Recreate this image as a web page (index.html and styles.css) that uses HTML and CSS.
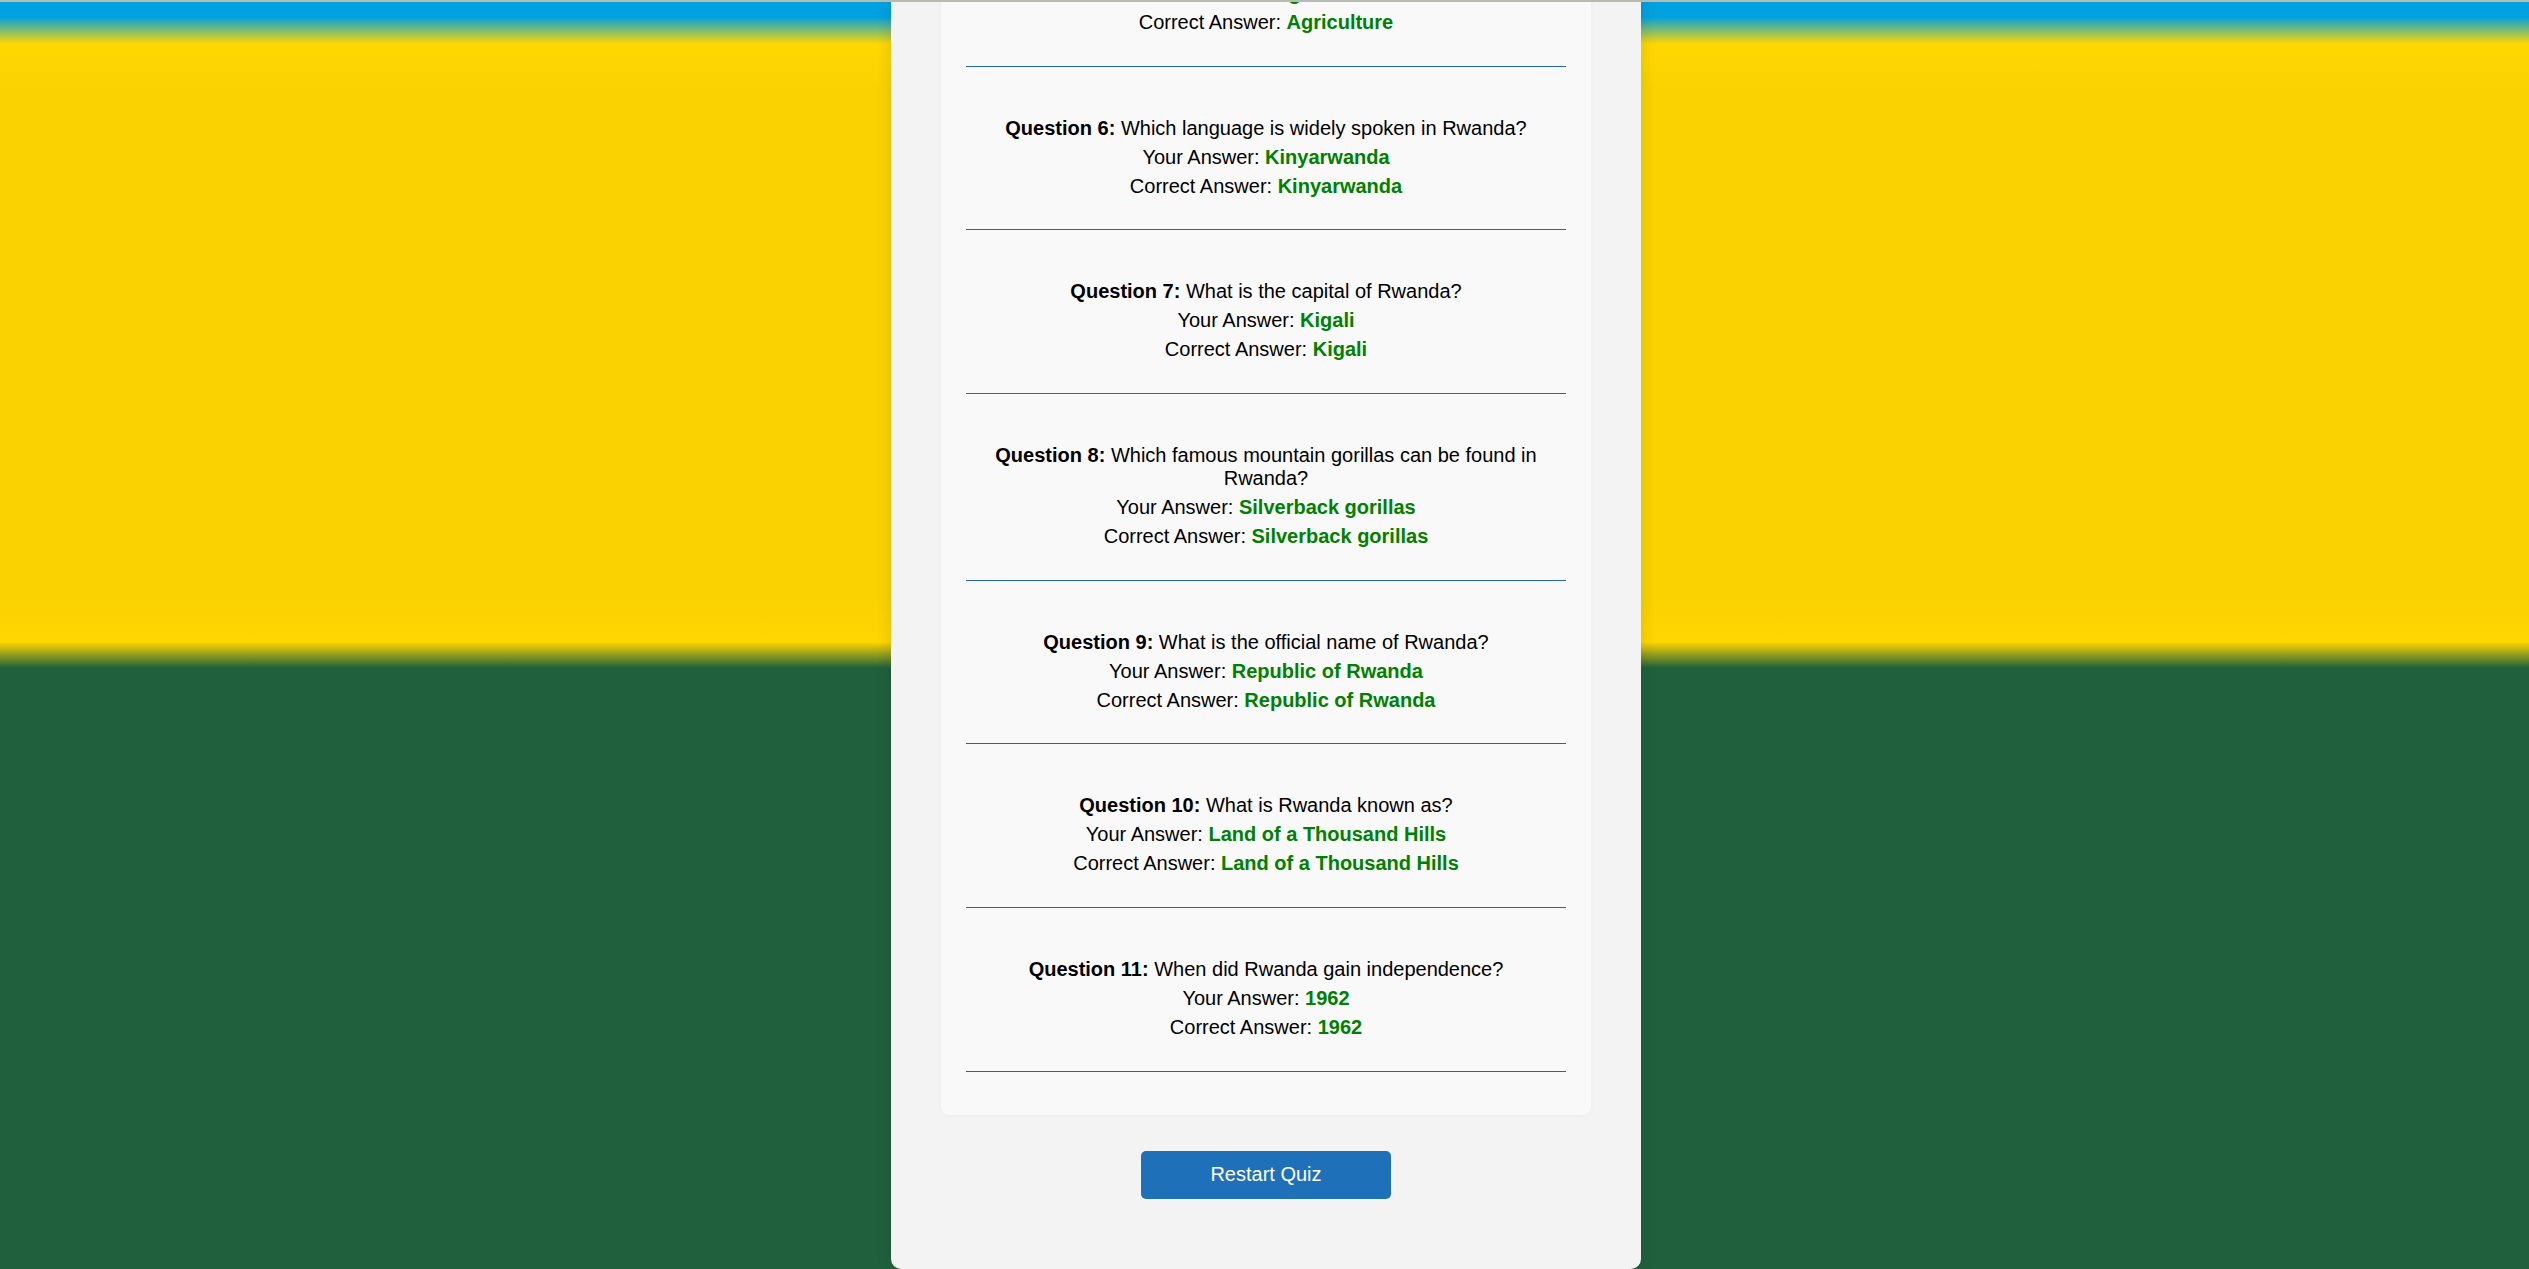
FILE: index.html
```html
<!DOCTYPE html>
<html lang="en">
<head>
<meta charset="utf-8">
<title>Rwanda Quiz - Results</title>
<link rel="stylesheet" href="styles.css">
</head>
<body>
<div class="topline"></div>
<main class="quiz">
  <section class="results">
    <div class="result">
      <p>Your Answer: <b class="ok">Agriculture</b></p>
      <p>Correct Answer: <b class="ok">Agriculture</b></p>
    </div>
    <div class="result">
      <p><b>Question 6:</b> Which language is widely spoken in Rwanda?</p>
      <p>Your Answer: <b class="ok">Kinyarwanda</b></p>
      <p>Correct Answer: <b class="ok">Kinyarwanda</b></p>
    </div>
    <div class="result">
      <p><b>Question 7:</b> What is the capital of Rwanda?</p>
      <p>Your Answer: <b class="ok">Kigali</b></p>
      <p>Correct Answer: <b class="ok">Kigali</b></p>
    </div>
    <div class="result">
      <p><b>Question 8:</b> Which famous mountain gorillas can be found in Rwanda?</p>
      <p>Your Answer: <b class="ok">Silverback gorillas</b></p>
      <p>Correct Answer: <b class="ok">Silverback gorillas</b></p>
    </div>
    <div class="result">
      <p><b>Question 9:</b> What is the official name of Rwanda?</p>
      <p>Your Answer: <b class="ok">Republic of Rwanda</b></p>
      <p>Correct Answer: <b class="ok">Republic of Rwanda</b></p>
    </div>
    <div class="result">
      <p><b>Question 10:</b> What is Rwanda known as?</p>
      <p>Your Answer: <b class="ok">Land of a Thousand Hills</b></p>
      <p>Correct Answer: <b class="ok">Land of a Thousand Hills</b></p>
    </div>
    <div class="result">
      <p><b>Question 11:</b> When did Rwanda gain independence?</p>
      <p>Your Answer: <b class="ok">1962</b></p>
      <p>Correct Answer: <b class="ok">1962</b></p>
    </div>
  </section>
  <div class="actions">
    <button class="restart" type="button">Restart Quiz</button>
  </div>
</main>
</body>
</html>
```
FILE: styles.css
```css
html {
  min-height: 100%;
  background-color: #20603d;
  background-image: linear-gradient(to bottom,
    #00a1e0 0px, #00a1e0 17px,
    #ffd700 44px, #fad201 90px,
    #fad201 600px, #ffd600 642px,
    #20603d 668px, #20603d 100%);
  background-attachment: fixed;
}

body {
  margin: 0;
  padding-left: 3px;
  font-family: "Liberation Sans", Arial, sans-serif;
  font-size: 20px;
  color: #000;
}

.topline {
  position: fixed;
  top: 0;
  left: 0;
  right: 0;
  height: 2px;
  background: #b6bcb1;
  z-index: 10;
}

.quiz {
  width: 750px;
  box-sizing: border-box;
  margin: -68px auto 0;
  padding: 0 50px 70px;
  background: #f3f3f3;
  border-radius: 10px;
  box-shadow: 0 0 16px rgba(0, 0, 0, 0.12);
}

.results {
  background: #f9f9f9;
  border-radius: 8px;
  padding: 0 25px 43px;
  box-shadow: 0 0 4px rgba(0, 0, 0, 0.04);
}

.result {
  display: flex;
  flex-direction: column;
  gap: 6px;
  padding: 50px 0 31.67px;
  border-bottom: 1px solid #2467ae;
  text-align: center;
  line-height: 23px;
}

.result p {
  margin: 0;
}

.ok {
  color: #008000;
}

.actions {
  display: flex;
  justify-content: center;
  padding-top: 36px;
}

.restart {
  width: 250px;
  height: 48px;
  border: none;
  border-radius: 5px;
  background: #1e70b9;
  color: #fff;
  font-family: "Liberation Sans", Arial, sans-serif;
  font-size: 20px;
  cursor: pointer;
}
```
